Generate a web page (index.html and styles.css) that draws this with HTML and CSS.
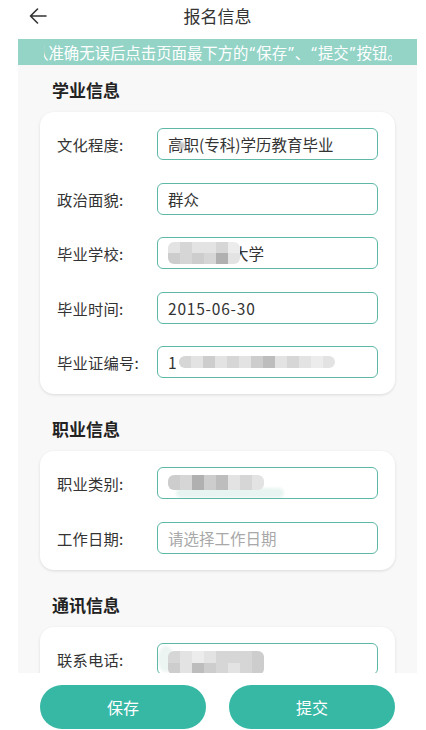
FILE: index.html
```html
<!DOCTYPE html>
<html lang="zh-CN">
<head>
<meta charset="utf-8">
<title>报名信息</title>
<link rel="stylesheet" href="styles.css">
</head>
<body>
<div class="app">
  <header class="topbar">
    <svg class="back" width="18" height="16" viewBox="0 0 18 16" aria-hidden="true">
      <path d="M17 8H1.5M8.5 1L1.5 8l7 7" fill="none" stroke="#333" stroke-width="1.6" stroke-linecap="round" stroke-linejoin="round"/>
    </svg>
    <h1 class="title">报名信息</h1>
    <span></span>
  </header>
  <main class="content">
    <div class="notice"><div class="marquee"><span class="cut">认</span>准确无误后点击页面最下方的<span class="q">“</span>保存<span class="q">”</span>、<span class="q">“</span>提交<span class="q">”</span>按钮。</div></div>

    <section class="group first">
      <h2 class="group-title">学业信息</h2>
      <div class="card">
        <div class="row"><span class="label">文化程度:</span><div class="field">高职(专科)学历教育毕业<i class="dot"></i></div></div>
        <div class="row"><span class="label">政治面貌:</span><div class="field">群众</div></div>
        <div class="row"><span class="label">毕业学校:</span><div class="field"><span class="mosaic m-school"><i class="a"></i><i class="b"></i><i class="a"></i><i class="a"></i><i class="b"></i><i class="f"></i><i class="c"></i><i class="b"></i><i class="c"></i><i class="b"></i><i class="e"></i><i class="a"></i></span><span class="after">大学</span></div></div>
        <div class="row"><span class="label">毕业时间:</span><div class="field"><span class="num">2015-06-30</span></div></div>
        <div class="row"><span class="label">毕业证编号:</span><div class="field">1<span class="mosaic m-cert"><i class="b"></i><i class="a"></i><i class="c"></i><i class="a"></i><i class="b"></i><i class="a"></i><i class="c"></i><i class="d"></i><i class="a"></i><i class="b"></i><i class="a"></i><i class="f"></i><i class="a"></i></span></div></div>
      </div>
    </section>

    <section class="group">
      <h2 class="group-title">职业信息</h2>
      <div class="card">
        <div class="row"><span class="label">职业类别:</span><div class="field"><span class="mosaic m-job"><i class="c"></i><i class="b"></i><i class="e"></i><i class="c"></i><i class="d"></i><i class="a"></i><i class="b"></i><i class="a"></i></span><i class="glow"></i></div></div>
        <div class="row"><span class="label">工作日期:</span><div class="field placeholder">请选择工作日期</div></div>
      </div>
    </section>

    <section class="group">
      <h2 class="group-title">通讯信息</h2>
      <div class="card">
        <div class="row"><span class="label">联系电话:</span><div class="field"><i class="halo"></i><span class="mosaic m-phone"><i class="b"></i><i class="a"></i><i class="f"></i><i class="a"></i><i class="b"></i><i class="b"></i><i class="b"></i><i class="c"></i><i class="c"></i><i class="a"></i><i class="d"></i><i class="c"></i><i class="b"></i><i class="a"></i><i class="b"></i><i class="c"></i></span></div></div>
      </div>
    </section>
  </main>
  <footer class="actions">
    <button class="btn" type="button">保存</button>
    <button class="btn" type="button">提交</button>
  </footer>
</div>
</body>
</html>
```
FILE: styles.css
```css
html, body {
  margin: 0;
  padding: 0;
  background: #fff;
}
body {
  height: 730px;
  overflow: hidden;
  font-family: "Noto Sans CJK SC", "Noto Sans", sans-serif;
  color: #333;
}
.app {
  width: 399px;
  margin-left: 18px;
  height: 730px;
  display: flex;
  flex-direction: column;
}
.topbar {
  height: 39px;
  flex: none;
  display: grid;
  grid-template-columns: 40px 1fr 40px;
  align-items: start;
  padding-top: 5px;
  box-sizing: border-box;
}
.back {
  margin: 3px 0 0 11px;
  display: block;
}
.title {
  margin: 0;
  text-align: center;
  font-size: 17px;
  line-height: 22px;
  font-weight: 400;
  color: #333;
}
.content {
  flex: 1;
  min-height: 0;
  overflow: hidden;
  background: #f8f8f8;
}
.notice {
  height: 26px;
  background: #93d4c7;
  padding: 0 25px 0 26px;
  overflow: hidden;
}
.marquee {
  overflow: hidden;
  white-space: nowrap;
  color: #fff;
  font-size: 15.4px;
  line-height: 26px;
}
.cut {
  display: inline-block;
  margin-left: -11px;
}
.q {
  display: inline-block;
  width: 7.75px;
  text-align: center;
  font-family: "Noto Sans", sans-serif;
}
.group-title {
  margin: 0;
  padding: 24px 0 11px 34px;
  font-size: 17px;
  line-height: 22px;
  font-weight: 700;
  color: #222;
}
.group.first .group-title {
  padding-top: 14px;
}
.card {
  margin: 0 22px;
  background: #fff;
  border-radius: 14px;
  box-shadow: 0 1px 3px rgba(0, 0, 0, 0.12);
  padding: 16px 17px;
  display: flex;
  flex-direction: column;
  gap: 22.5px;
}
.row {
  display: grid;
  grid-template-columns: 100px 1fr;
  align-items: center;
}
.label {
  font-size: 15.3px;
  letter-spacing: 0.2px;
  color: #333;
  white-space: nowrap;
}
.field {
  position: relative;
  height: 32px;
  box-sizing: border-box;
  border: 1px solid #5db8a7;
  border-radius: 6px;
  padding: 0 10px;
  display: flex;
  align-items: center;
  font-size: 15.5px;
  color: #333;
  white-space: nowrap;
  overflow: hidden;
}
.num {
  letter-spacing: 0.8px;
}
.placeholder {
  color: #a8a8a8;
}
.mosaic {
  position: relative;
  z-index: 1;
  display: inline-grid;
  grid-auto-rows: 11px;
  filter: blur(0.7px);
  border-radius: 6px;
  overflow: hidden;
}
.mosaic i {
  display: block;
}
.mosaic .a { background: #e3e3e3; }
.mosaic .b { background: #d6d6d6; }
.mosaic .c { background: #cdcdcd; }
.mosaic .d { background: #bdbdbd; }
.mosaic .e { background: #b0b0b0; }
.mosaic .f { background: #ececec; }
.m-school {
  grid-template-columns: repeat(6, 12px);
  margin-right: -7px;
}
.after {
  display: inline-block;
}
.m-cert {
  grid-template-columns: repeat(13, 12px);
  grid-auto-rows: 12px;
  margin-left: 2px;
}
.m-job {
  grid-template-columns: repeat(8, 12px);
  grid-auto-rows: 15px;
  margin-top: -2px;
}
.m-phone {
  grid-template-columns: repeat(8, 12px);
  grid-auto-rows: 12px;
  margin-top: 8px;
}
.dot {
  position: absolute;
  left: 20px;
  top: 13px;
  width: 7px;
  height: 7px;
  border-radius: 50%;
  background: #c4c4c4;
  filter: blur(1px);
}
.glow {
  position: absolute;
  left: 18px;
  top: 20px;
  width: 108px;
  height: 10px;
  border-radius: 5px;
  background: #e8f4f1;
  filter: blur(1.5px);
}
.halo {
  position: absolute;
  left: 0;
  top: 2px;
  width: 16px;
  height: 26px;
  border-radius: 50%;
  background: #edf5f3;
  filter: blur(1px);
}
.actions {
  height: 57px;
  flex: none;
  box-sizing: border-box;
  padding: 12px 22px 0;
  display: flex;
  gap: 23px;
  background: #fff;
}
.btn {
  flex: 1;
  height: 44px;
  border: none;
  border-radius: 22px;
  background: #37b8a5;
  color: #fff;
  font-family: "Noto Sans CJK SC", "Noto Sans", sans-serif;
  font-size: 16px;
  padding: 0;
}
```
